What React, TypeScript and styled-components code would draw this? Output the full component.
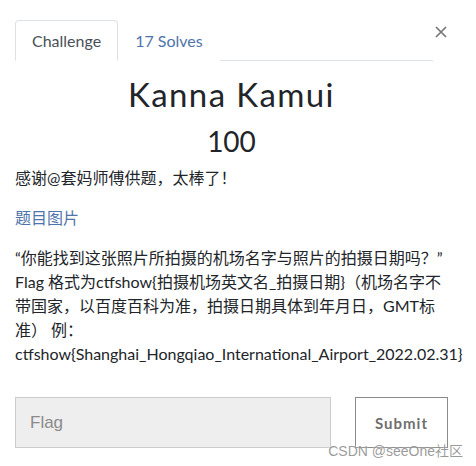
import React from 'react'
import styled, { createGlobalStyle } from 'styled-components'

const GlobalStyle = createGlobalStyle`
  html, body {
    margin: 0;
    background: #fff;
  }
  body {
    font-family: Lato, "Noto Sans CJK SC", sans-serif;
    color: #212529;
  }
`

const Modal = styled.div`
  position: relative;
  width: 476px;
  height: 466px;
  box-sizing: border-box;
  padding: 20px 28px 0 15px;
`

const Header = styled.div`
  display: flex;
  align-items: flex-start;
`

const Tabs = styled.div`
  flex: 1;
  display: flex;
  border-bottom: 1px solid #dee2e6;
  margin-right: 2px;
`

interface TabProps {
  active?: boolean
}
const Tab = styled.div<TabProps>`
  height: 39px;
  line-height: 39px;
  padding: 0 16px;
  margin-bottom: -1px;
  font-size: 16px;
  border: 1px solid ${p => p.active ? '#dee2e6' : 'transparent'};
  border-bottom-color: ${p => p.active ? '#fff' : 'transparent'};
  border-radius: 4px 4px 0 0;
  background: #fff;
  color: ${p => p.active ? '#495057' : '#4f74ab'};
`

const Close = styled.button`
  flex: none;
  width: 12px;
  height: 12px;
  margin: 6px 1px 0 0;
  padding: 0;
  border: 0;
  background: none;
  display: flex;
`

const Title = styled.h1`
  margin: 14px 0 10px;
  text-align: center;
  font-size: 33px;
  line-height: 1.2;
  font-weight: 400;
  letter-spacing: 1.4px;
  color: #212529;
`

const Value = styled.h2`
  margin: 0 0 8px;
  text-align: center;
  font-size: 28px;
  line-height: 1.2;
  font-weight: 400;
  color: #212529;
`

const Para = styled.p`
  margin: 0 0 16px;
  font-size: 16px;
  line-height: 24px;
`

const Link = styled.a`
  color: #4f74ab;
  text-decoration: none;
`

const Form = styled.div`
  display: flex;
  gap: 24px;
  padding-top: 15px;
`

const FlagInput = styled.input`
  flex: 1;
  min-width: 0;
  height: 51px;
  box-sizing: border-box;
  padding: 0 14px;
  background: #eeeeee;
  border: 1px solid #cccccc;
  font-family: "Liberation Sans", Arial, sans-serif;
  font-size: 17px;
  outline: none;
  &::placeholder {
    color: #8a8a8a;
  }
`

const SubmitButton = styled.button`
  flex: none;
  width: 93px;
  height: 51px;
  background: #fff;
  border: 1px solid #8a8a8a;
  font-family: Lato, sans-serif;
  font-weight: 700;
  font-size: 15px;
  letter-spacing: 1px;
  color: #6f6f6f;
`

const Watermark = styled.div`
  position: absolute;
  right: 13px;
  bottom: 6px;
  font-family: "Liberation Sans", Arial, "Noto Sans CJK SC", sans-serif;
  font-size: 14px;
  color: rgba(120, 120, 120, 0.75);
  text-shadow: 0 0 2px #fff;
  pointer-events: none;
`

export default function App() {
  return <>
    <GlobalStyle />
    <Modal>
      <Header>
        <Tabs>
          <Tab active>Challenge</Tab>
          <Tab>17 Solves</Tab>
        </Tabs>
        <Close aria-label="close">
          <svg width="12" height="12" viewBox="0 0 12 12">
            <path d="M1 1L11 11M11 1L1 11" stroke="#777" strokeWidth="1.7" />
          </svg>
        </Close>
      </Header>
      <Title>Kanna Kamui</Title>
      <Value>100</Value>
      <Para>感谢@套妈师傅供题，太棒了！</Para>
      <Para><Link href="#">题目图片</Link></Para>
      <Para>
        “你能找到这张照片所拍摄的机场名字与照片的拍摄日期吗？”
        Flag 格式为ctfshow{'{'}拍摄机场英文名_拍摄日期{'}'}（机场名字不带国家，以百度百科为准，拍摄日期具体到年月日，GMT标准） 例：
        ctfshow{'{'}Shanghai_Hongqiao_International_Airport_2022.02.31{'}'}
      </Para>
      <Form>
        <FlagInput placeholder="Flag" />
        <SubmitButton>Submit</SubmitButton>
      </Form>
      <Watermark>CSDN @seeOne社区</Watermark>
    </Modal>
  </>
}
